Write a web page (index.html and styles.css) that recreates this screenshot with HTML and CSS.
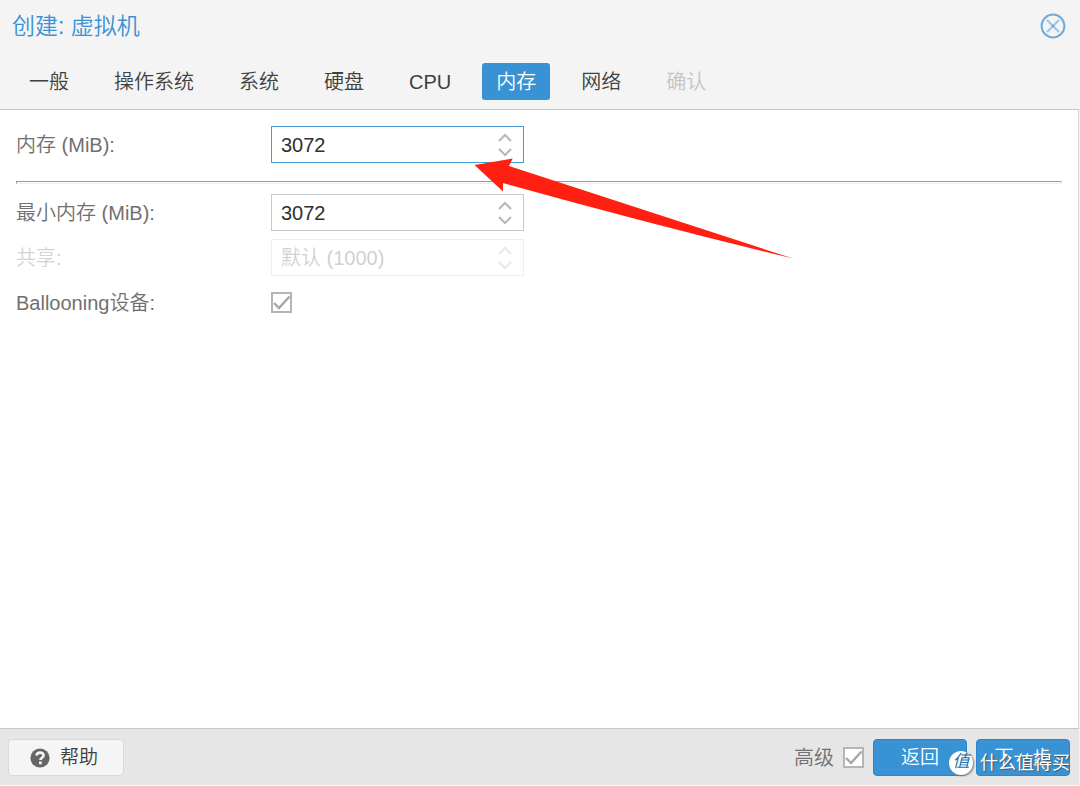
FILE: index.html
```html
<!DOCTYPE html>
<html lang="zh-CN">
<head>
    <meta charset="UTF-8">
    <meta name="viewport" content="width=device-width, initial-scale=1.0">
    <title>创建: 虚拟机</title>
    <link rel="stylesheet" href="styles.css">
</head>
<body>

    <div class="window">
        <!-- Title and wizard tabs -->
        <header class="header">
            <div class="title-bar">
                <h1>创建: 虚拟机</h1>
                <button type="button" class="close" aria-label="关闭">
                    <svg width="26" height="26" viewBox="0 0 26 26" fill="none">
                        <circle cx="13" cy="13" r="11.4" stroke="#6fabdc" stroke-width="2"/>
                        <path d="M7 7l12 12M19 7L7 19" stroke="#a3c6e8" stroke-width="2.4"/>
                        <circle cx="13" cy="13" r="1.2" fill="#5fa2d8"/>
                    </svg>
                </button>
            </div>
            <nav class="tabs">
                <button type="button" class="tab">一般</button>
                <button type="button" class="tab">操作系统</button>
                <button type="button" class="tab">系统</button>
                <button type="button" class="tab">硬盘</button>
                <button type="button" class="tab">CPU</button>
                <button type="button" class="tab active">内存</button>
                <button type="button" class="tab">网络</button>
                <button type="button" class="tab" disabled>确认</button>
            </nav>
        </header>

        <!-- Memory settings -->
        <main class="content">
            <div class="row">
                <label for="memory">内存 (MiB):</label>
                <div class="spinner focused">
                    <input type="text" id="memory" value="3072">
                    <svg class="arrows" width="14" height="24" viewBox="0 0 14 24" fill="none" stroke="#b9b9b9" stroke-width="2.2">
                        <path d="M1 8l6-6 6 6M1 16l6 6 6-6"/>
                    </svg>
                </div>
            </div>
            <hr>
            <div class="row">
                <label for="min-memory">最小内存 (MiB):</label>
                <div class="spinner">
                    <input type="text" id="min-memory" value="3072">
                    <svg class="arrows" width="14" height="24" viewBox="0 0 14 24" fill="none" stroke="#b9b9b9" stroke-width="2.2">
                        <path d="M1 8l6-6 6 6M1 16l6 6 6-6"/>
                    </svg>
                </div>
            </div>
            <div class="row disabled">
                <label for="shares">共享:</label>
                <div class="spinner">
                    <input type="text" id="shares" placeholder="默认 (1000)" disabled>
                    <svg class="arrows" width="14" height="24" viewBox="0 0 14 24" fill="none" stroke="#b9b9b9" stroke-width="2.2">
                        <path d="M1 8l6-6 6 6M1 16l6 6 6-6"/>
                    </svg>
                </div>
            </div>
            <div class="row">
                <label for="ballooning">Ballooning设备:</label>
                <span class="check">
                    <input type="checkbox" id="ballooning" checked>
                    <svg class="tick" width="21" height="21" viewBox="0 0 21 21" fill="none" stroke="#a6a6a6" stroke-width="2.4">
                        <path d="M3 11l5 5L18.5 4.5"/>
                    </svg>
                </span>
            </div>
        </main>

        <footer class="footer">
            <button type="button" class="button help">
                <svg width="20" height="20" viewBox="0 0 20 20">
                    <circle cx="10" cy="10" r="9.6" fill="#666"/>
                    <path d="M6.4 7.6C6.8 5.4 8.2 4.6 10.1 4.6c2 0 3.5 1.1 3.5 2.9 0 2.3-3.2 2.2-3.2 4.6" fill="none" stroke="#f5f5f5" stroke-width="2.6"/>
                    <path d="M9 13.5h2.8v2.8H9z" fill="#f5f5f5"/>
                </svg>
                帮助
            </button>
            <div class="actions">
                <label for="advanced">高级</label>
                <span class="check">
                    <input type="checkbox" id="advanced" checked>
                    <svg class="tick" width="21" height="21" viewBox="0 0 21 21" fill="none" stroke="#a6a6a6" stroke-width="2.4">
                        <path d="M3 11l5 5L18.5 4.5"/>
                    </svg>
                </span>
                <button type="button" class="button primary">返回</button>
                <button type="button" class="button primary">下一步</button>
            </div>
        </footer>

        <!-- Arrow pointing at the memory field -->
        <svg class="pointer" width="320" height="102" viewBox="0 0 320 102">
            <path d="M0.5 7L38.7 0.5 35 8 319 100.500Q180 67 29 25V33.500z" fill="#ff2012"/>
        </svg>

        <div class="watermark">
            <span class="watermark-logo">值</span>
            <span>什么值得买</span>
        </div>
    </div>

</body>
</html>
```

FILE: styles.css
```css
* {
    box-sizing: border-box;
}
body {
    margin: 0;
    background-color: #fff;
    font-family: "Liberation Sans", "Noto Sans CJK SC", sans-serif;
    font-size: 20px;
    font-weight: 350;
    line-height: 24px;
    color: #404040;
}
button, input {
    font: inherit;
    color: inherit;
}
button {
    cursor: pointer;
}
.window {
    position: relative;
    display: flex;
    flex-direction: column;
    min-height: 100vh;
    border-right: 1px solid #f4f4f4;
    border-bottom: 1px solid #fafafa;
}

/* header */
.header {
    background-color: #f4f4f4;
    border-bottom: 1px solid #c8c8c8;
    padding-bottom: 9px;
}
.title-bar {
    display: flex;
    align-items: center;
    justify-content: space-between;
    height: 52px;
    padding: 0 13px 0 12px;
}
h1 {
    margin: 0;
    font-size: 23px;
    font-weight: 350;
    color: #3892d4;
}
.close {
    display: flex;
    padding: 0;
    border: none;
    background: none;
}
.tabs {
    display: flex;
    gap: 17px;
    padding: 11px 15px 0;
}
.tab {
    height: 37px;
    padding: 1px 14px 0;
    border: none;
    border-radius: 3px;
    background: none;
}
.tab.active {
    background-color: #3892d4;
    color: #fff;
}
.tab:disabled {
    color: #c4c4c4;
    cursor: default;
}

/* form */
.content {
    flex: 1;
    display: flex;
    flex-direction: column;
    gap: 8px;
    padding: 16px;
    border-right: 1px solid #d4d4d4;
}
.row {
    display: flex;
    align-items: center;
    height: 37px;
    color: #707070;
}
.row label {
    width: 255px;
}
.row.disabled {
    opacity: 0.3;
}
.spinner {
    display: flex;
    align-items: center;
    width: 253px;
    height: 37px;
    padding-right: 11px;
    border: 1px solid #c8c8c8;
}
.spinner.focused {
    border-color: #4a9cd8;
}
.spinner input {
    flex: 1;
    min-width: 0;
    padding: 0 9px;
    border: none;
    outline: none;
    background: none;
    color: #303030;
}
.spinner input::placeholder {
    color: #666;
    opacity: 1;
}
hr {
    width: 100%;
    height: 3px;
    margin: 10px 0 2px;
    border: 1px solid #eee;
    border-top-color: #999;
    border-left-color: #999;
}
.check {
    display: grid;
    width: 21px;
    height: 21px;
}
.check input, .tick {
    grid-area: 1 / 1;
}
.check input {
    appearance: none;
    width: 21px;
    height: 21px;
    margin: 0;
    border: 2px solid #b5b5b5;
    background-color: #fff;
}
.check input:not(:checked) + .tick {
    display: none;
}
.tick {
    pointer-events: none;
}

/* footer */
.footer {
    display: flex;
    align-items: center;
    justify-content: space-between;
    padding: 10px 9px 9px 8px;
    border-top: 1px solid #c8c8c8;
    background-color: #e6e6e6;
}
.button {
    display: flex;
    align-items: center;
    justify-content: center;
    height: 37px;
    border: 1px solid #d8d8d8;
    border-radius: 4px;
    background-color: #f5f5f5;
    font-size: 19px;
}
.help {
    justify-content: flex-start;
    gap: 10px;
    width: 116px;
    padding: 0 21px;
}
.primary {
    width: 94px;
    border-color: #2c86c9;
    background-color: #3892d4;
    color: #fff;
}
.actions {
    display: flex;
    align-items: center;
    gap: 9px;
    color: #707070;
}

/* overlays */
.pointer {
    position: absolute;
    left: 474px;
    top: 158px;
    pointer-events: none;
}
.watermark {
    position: absolute;
    right: 9px;
    bottom: 10px;
    display: flex;
    align-items: center;
    gap: 7px;
    font-size: 18px;
    font-weight: 400;
    color: #fff;
    text-shadow: 1px 1px 1px #555;
    pointer-events: none;
}
.watermark-logo {
    width: 24px;
    height: 24px;
    border-radius: 50%;
    background-color: #fff;
    box-shadow: 1px 1px 2px #777;
    font-size: 17px;
    line-height: 22px;
    font-style: italic;
    text-align: center;
    text-shadow: none;
    color: #1c6ca8;
}
```
